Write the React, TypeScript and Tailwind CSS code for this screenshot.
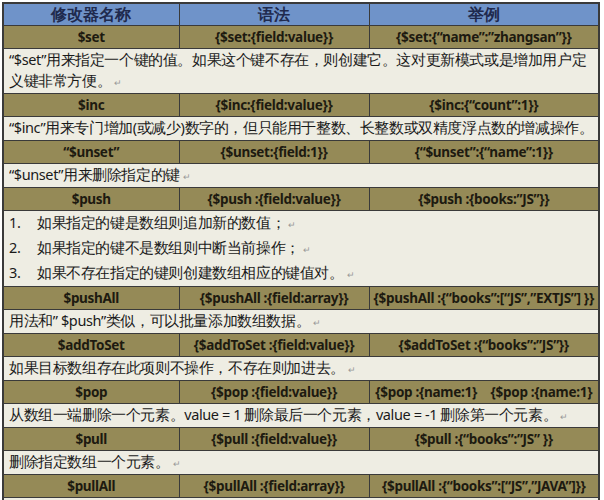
const rows: { cells: string[]; desc: string[]; list?: boolean; h: string }[] = [
  { cells: ["$set", "{$set:{field:value}}", "{$set:{“name”:”zhangsan”}}"], desc: ["“$set”用来指定一个键的值。如果这个键不存在，则创建它。这对更新模式或是增加用户定义键非常方便。"], h: "h-[43px]" },
  { cells: ["$inc", "{$inc:{field:value}}", "{$inc:{“count”:1}}"], desc: ["“$inc”用来专门增加(或减少)数字的，但只能用于整数、长整数或双精度浮点数的增减操作。"], h: "h-[22px]" },
  { cells: ["“$unset”", "{$unset:{field:1}}", "{“$unset”:{“name”:1}}"], desc: ["“$unset”用来删除指定的键"], h: "h-[21px]" },
  { cells: ["$push", "{$push :{field:value}}", "{$push :{books:”JS”}}"], desc: ["如果指定的键是数组则追加新的数值；", "如果指定的键不是数组则中断当前操作；", "如果不存在指定的键则创建数组相应的键值对。"], list: true, h: "h-[68px]" },
  { cells: ["$pushAll", "{$pushAll :{field:array}}", "{$pushAll :{“books”:[“JS”,”EXTJS”] }}"], desc: ["用法和” $push”类似，可以批量添加数组数据。"], h: "h-[22px]" },
  { cells: ["$addToSet", "{$addToSet :{field:value}}", "{$addToSet :{“books”:”JS”}}"], desc: ["如果目标数组存在此项则不操作，不存在则加进去。"], h: "h-[22px]" },
  { cells: ["$pop", "{$pop :{field:value}}", "{$pop :{name:1}　{$pop :{name:1}"], desc: ["从数组一端删除一个元素。value = 1 删除最后一个元素，value = -1 删除第一个元素。"], h: "h-[22px]" },
  { cells: ["$pull", "{$pull :{field:value}}", "{$pull :{“books”:”JS” }}"], desc: ["删除指定数组一个元素。"], h: "h-[22px]" },
  { cells: ["$pullAll", "{$pullAll :{field:array}}", "{$pullAll :{“books”:[“JS”,”JAVA”]}}"], desc: ["一次性删除多个指定数组。"], h: "h-[23px]" },
];

function Mark() {
  return <span className="ml-[3px] text-[9px] text-[#999]">↵</span>;
}

export default function App() {
  return (
    <div className="w-[604px] h-[500px] overflow-hidden bg-white p-[2px] pr-[4px] font-['Liberation_Sans','Noto_Sans_CJK_SC',sans-serif]">
      <table className="w-[598px] table-fixed border-collapse border-2 border-[#3a3a3a]">
        <colgroup>
          <col className="w-[176px]" />
          <col className="w-[190px]" />
          <col />
        </colgroup>
        <tbody>
          <tr className="h-[22px] bg-[#6f93c9] text-[#1f2a4e] text-[16px] font-bold">
            {["修改器名称", "语法", "举例"].map((t) => (
              <td key={t} className="border border-[#3a3a3a] p-0 text-center leading-[20px]">{t}</td>
            ))}
          </tr>
          {rows.map((r) => (
            <>
              <tr key={r.cells[0]} className="h-[23px] bg-[#958a57] text-[#1d1a10] text-[13.5px] font-bold">
                {r.cells.map((c, i) => (
                  <td key={i} className="border border-[#3a3a3a] p-0 text-center leading-[20px] whitespace-nowrap overflow-hidden tracking-[-0.3px]">{c}</td>
                ))}
              </tr>
              <tr className={`${r.h} bg-[#eeede3] text-[#1a1a1a] text-[14.5px] tracking-[-0.4px]`}>
                <td colSpan={3} className="border border-[#3a3a3a] py-0 px-[5px] leading-[21px] align-middle">
                  {r.list ? (
                    r.desc.map((d, i) => (
                      <div key={i} className="flex leading-[22px]">
                        <span className="w-[28px]">{i + 1}.</span>
                        <span>{d}<Mark /></span>
                      </div>
                    ))
                  ) : (
                    <div className={r.h === "h-[43px]" ? "" : "whitespace-nowrap overflow-hidden"}>
                      {r.desc[0]}<Mark />
                    </div>
                  )}
                </td>
              </tr>
            </>
          ))}
        </tbody>
      </table>
    </div>
  );
}
